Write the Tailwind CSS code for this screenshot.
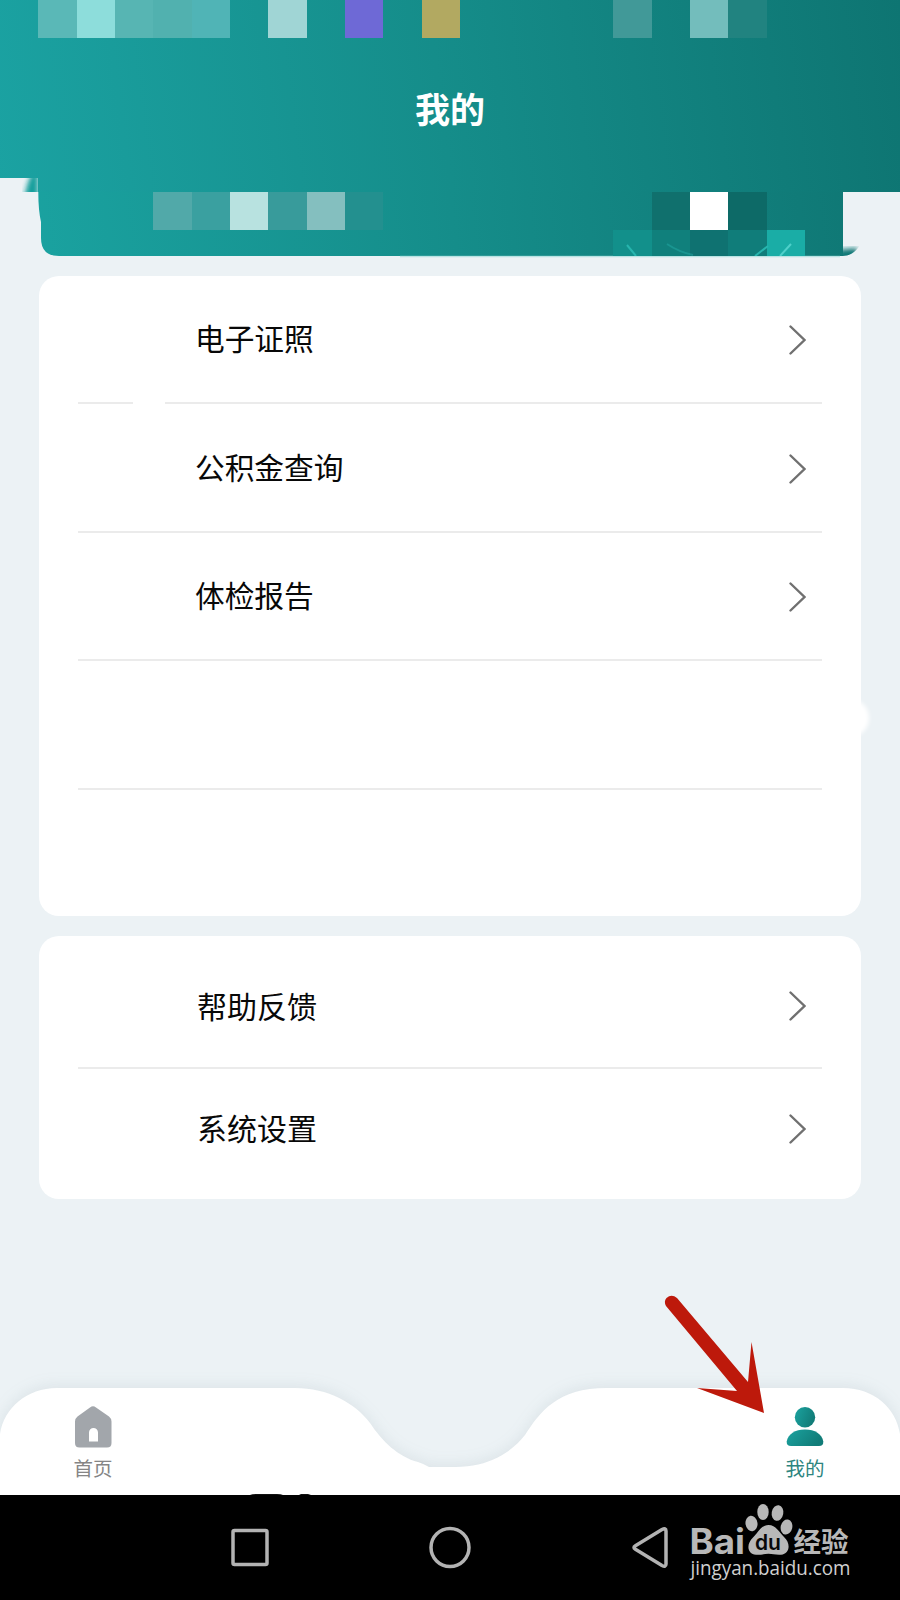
<!DOCTYPE html>
<html lang="zh-CN">
  <head>
    <meta charset="UTF-8" />
    <meta name="viewport" content="width=device-width, initial-scale=1.0" />
    <title>我的</title>
    <script src="https://cdn.jsdelivr.net/npm/@tailwindcss/browser@4"></script>
  </head>
  <body
    class="relative w-[900px] h-[1600px] overflow-hidden bg-[#ecf2f5] font-['Noto_Sans_CJK_SC',sans-serif] text-[#080808] flex flex-col"
  >
    <!-- Header -->
    <header class="relative h-[256px] shrink-0">
      <svg class="absolute inset-0" width="900" height="262" viewBox="0 0 900 262">
        <defs>
          <linearGradient id="teal" gradientUnits="userSpaceOnUse" x1="-30" y1="120" x2="900" y2="0">
            <stop offset="0" stop-color="#1ba3a3" />
            <stop offset="0.5" stop-color="#158d8a" />
            <stop offset="1" stop-color="#0e7572" />
          </linearGradient>
          <linearGradient id="cardTeal" gradientUnits="userSpaceOnUse" x1="30" y1="250" x2="870" y2="150">
            <stop offset="0" stop-color="#1aa2a0" />
            <stop offset="0.5" stop-color="#158d8a" />
            <stop offset="1" stop-color="#0f7774" />
          </linearGradient>
          <filter id="soft"><feGaussianBlur stdDeviation="2.5" /></filter>
          <clipPath id="edge"><rect x="0" y="178" width="60" height="14" /></clipPath>
          <clipPath id="corner"><path d="M843 240H863Q855 256 843 256Z" /></clipPath>
        </defs>
        <path d="M0 0H900V192H38V178H0Z" fill="url(#teal)" />
        <path d="M38 170H34Q27 180 24 200H38V170Z" fill="#199f9c" filter="url(#soft)" clip-path="url(#edge)" />
        <path d="M38.3 191.500H843V256H59Q41 256 41 238V222Q38.300 210 38.300 192Z" fill="url(#cardTeal)" />
        <path d="M838 250L857 248V260H838Z" fill="#0f7774" filter="url(#soft)" clip-path="url(#corner)" />
        <path d="M400 256.500H840" stroke="#a4dedc" stroke-width="1.500" opacity="0.7" />
      </svg>
      <div class="relative h-[38.3px] pl-[38.33px] flex">
        <span class="w-[38.33px] bg-[#5ab8b7]"></span>
        <span class="w-[38.33px] bg-[#8ddddb]"></span>
        <span class="w-[38.33px] bg-[#57b5b3]"></span>
        <span class="w-[38.33px] bg-[#51b1af]"></span>
        <span class="w-[38.33px] bg-[#50b4b6]"></span>
        <span class="w-[38.33px] ml-[38.33px] bg-[#a0d5d5]"></span>
        <span class="w-[38.33px] ml-[38.33px] bg-[#6e69d6]"></span>
        <span class="w-[38.33px] ml-[38.33px] bg-[#b2a961]"></span>
        <span class="w-[38.33px] ml-[153.33px] bg-[#419998]"></span>
        <span class="w-[38.33px] ml-[38.33px] bg-[#73bdbc]"></span>
        <span class="w-[38.33px] bg-[#218380]"></span>
      </div>
      <h1 class="relative h-[153.4px] pb-[14px] flex items-center justify-center text-[35px] leading-none font-bold text-white">
        我的
      </h1>
      <div class="relative h-[38.3px] pl-[153.33px] flex">
        <span class="w-[38.33px] bg-[#51a9a9]"></span>
        <span class="w-[38.33px] bg-[#3aa0a0]"></span>
        <span class="w-[38.33px] bg-[#b8e2e0]"></span>
        <span class="w-[38.33px] bg-[#389b9b]"></span>
        <span class="w-[38.33px] bg-[#84bfbf]"></span>
        <span class="w-[38.33px] bg-[#23908f]"></span>
        <span class="w-[38.33px] ml-[268.33px] bg-[#10706d]"></span>
        <span class="w-[38.33px] bg-white"></span>
        <span class="w-[38.33px] bg-[#0d6a67]"></span>
      </div>
      <div class="relative h-[26px] pl-[613.3px] flex">
        <span class="w-[38.33px] bg-[#12908b]"></span>
        <span class="w-[38.33px] bg-[#10807c]"></span>
        <span class="w-[38.33px] bg-[#0f7271]"></span>
        <span class="w-[38.33px] bg-[#107d7a]"></span>
        <span class="w-[38.33px] bg-[#1aada6]"></span>
      </div>
      <svg class="absolute left-[613px] top-[238px]" width="192" height="18" viewBox="0 0 192 18" fill="none" stroke="#27b5ae" stroke-width="2">
        <path d="M14 7L23 18" />
        <path d="M54 6Q66 14 80 17" opacity="0.4" />
        <path d="M142 18L155 8" />
        <path d="M167 18L178 6" stroke="#4fd0ca" />
      </svg>
    </header>

    <main class="relative flex flex-col gap-5 px-[39px] pt-5">
      <!-- Services -->
      <div class="absolute left-[831px] top-[443px] w-[38px] h-[38px] rounded-full bg-white blur-[2px]"></div>
      <section class="relative h-[640px] rounded-[20px] bg-white px-[39px]">
        <a class="relative h-[128.400px] pl-[117px] pr-4 flex items-center justify-between border-b-2 border-[#ebebeb] text-[29.700px] leading-none">
          <span class="-mt-[2px]">电子证照</span>
          <svg class="mt-[2px]" width="17" height="30" viewBox="0 0 17 30" fill="none" stroke="#707070" stroke-width="2.4" stroke-linecap="round"><path d="M1.500 1.500L15.500 15L1.500 28.500" /></svg>
          <i class="absolute left-[55px] -bottom-[3px] w-[32px] h-1 bg-white"></i>
        </a>
        <a class="h-[128.400px] pl-[117px] pr-4 flex items-center justify-between border-b-2 border-[#ebebeb] text-[29.700px] leading-none">
          <span class="-mt-[2px]">公积金查询</span>
          <svg class="mt-[2px]" width="17" height="30" viewBox="0 0 17 30" fill="none" stroke="#707070" stroke-width="2.4" stroke-linecap="round"><path d="M1.500 1.500L15.500 15L1.500 28.500" /></svg>
        </a>
        <a class="h-[128.400px] pl-[117px] pr-4 flex items-center justify-between border-b-2 border-[#ebebeb] text-[29.700px] leading-none">
          <span class="-mt-[2px]">体检报告</span>
          <svg class="mt-[2px]" width="17" height="30" viewBox="0 0 17 30" fill="none" stroke="#707070" stroke-width="2.4" stroke-linecap="round"><path d="M1.500 1.500L15.500 15L1.500 28.500" /></svg>
        </a>
        <div class="h-[128.400px] border-b-2 border-[#ebebeb]"></div>
      </section>

      <!-- Support -->
      <section class="h-[263px] rounded-[20px] bg-white px-[39px]">
        <a class="h-[132.500px] pt-[9px] pl-[119px] pr-4 flex items-center justify-between border-b-2 border-[#ebebeb] text-[30px] leading-none">
          <span class="-mt-[2px]">帮助反馈</span>
          <svg class="mt-[1px]" width="17" height="30" viewBox="0 0 17 30" fill="none" stroke="#707070" stroke-width="2.4" stroke-linecap="round"><path d="M1.500 1.500L15.500 15L1.500 28.500" /></svg>
        </a>
        <a class="h-[120px] pl-[119px] pr-4 flex items-center justify-between text-[30px] leading-none">
          <span class="-mt-[3px]">系统设置</span>
          <svg width="17" height="30" viewBox="0 0 17 30" fill="none" stroke="#707070" stroke-width="2.4" stroke-linecap="round"><path d="M1.500 1.500L15.500 15L1.500 28.500" /></svg>
        </a>
      </section>
    </main>

    <!-- Tab bar -->
    <nav class="relative mt-auto h-[107px] shrink-0 px-[73px] pt-[17px] flex justify-between">
      <svg class="absolute left-0 bottom-0 overflow-visible" width="900" height="107" viewBox="0 0 900 107">
        <path
          d="M0 107V46C4 20 27 0 57 0H295C328 0 355 15 370 35C382 53 398 69 418 74Q424 76 429 79H456C488 79 511 65 525 47C540 24 557 0 607 0H843C874 0 896 20 900 46V107Z"
          fill="white"
          class="drop-shadow-[0_-3px_7px_rgba(90,120,130,0.10)]"
        />
        <path d="M250 107Q252 106 257 106H277Q281 106 283 107ZM299 107L301 106H308L311 107Z" fill="#111" />
      </svg>
      <a class="relative w-10 flex flex-col items-center text-[19.500px] leading-none text-[#858585]">
        <svg width="40" height="44" viewBox="0 0 40 44">
          <path d="M17 2.500Q20 .2 23 2.500L36 11.500Q38.500 13.500 38.500 16.500V38Q38.500 42.500 34 42.500H6.500Q2 42.500 2 38V16.500Q2 13.500 4.500 11.500Z" fill="#a2a6ab" />
          <path d="M16 36.500V27.500a4.500 4.500 0 0 1 9 0V36.500Z" fill="white" />
        </svg>
        <span class="mt-[9px] whitespace-nowrap">首页</span>
      </a>
      <a class="relative w-10 mr-[2px] flex flex-col items-center text-[19.500px] leading-none text-[#2d8580]">
        <svg width="40" height="44" viewBox="0 0 40 44">
          <defs>
            <linearGradient id="person" x1="0" y1="0" x2="1" y2="0.400">
              <stop offset="0" stop-color="#1ba3a0" />
              <stop offset="1" stop-color="#117c78" />
            </linearGradient>
          </defs>
          <circle cx="20" cy="12.300" r="10.200" fill="url(#person)" />
          <path d="M6 41Q1.500 41 1.700 36.500C3 29 10 24.500 20 24.500S37 29 38.300 36.500Q38.500 41 34 41Z" fill="url(#person)" />
        </svg>
        <span class="mt-[9px] whitespace-nowrap">我的</span>
      </a>
    </nav>

    <!-- Android navigation -->
    <footer class="relative h-[105px] shrink-0 bg-black">
      <svg width="900" height="105" viewBox="0 0 900 105" fill="none" stroke="#b3b3b3" stroke-width="3.500" stroke-linejoin="round">
        <rect x="233" y="35.500" width="34" height="34" rx="1.500" />
        <circle cx="450" cy="52.500" r="19" />
        <path d="M634 52.500Q634 51.500 635 51L662 34.500Q666 32.500 666 36V69Q666 72.500 662 70.500L635 54Q634 53.500 634 52.500Z" />
        <g fill="#b8b8b8" stroke="none">
          <ellipse cx="751.500" cy="28.500" rx="6" ry="7.800" transform="rotate(-8 751.500 28.500)" />
          <ellipse cx="763" cy="17" rx="5.700" ry="8" />
          <ellipse cx="777.500" cy="18" rx="5.800" ry="7.800" transform="rotate(10 777.500 18)" />
          <ellipse cx="786.500" cy="32" rx="5.800" ry="7.600" transform="rotate(12 786.500 32)" />
          <path d="M768.500 30C776 30 779 37 784 42C791 48 790 59 781 59.700C775 60 773 58.800 768.500 58.800S761 60 756 59.700C747 59 746 49 753 42.500C758 38 761 30 768.500 30Z" />
          <text x="689.500" y="59" font-family="Inter, sans-serif" font-weight="700" font-size="35" textLength="55.500" lengthAdjust="spacingAndGlyphs">Bai</text>
          <text x="755" y="55" fill="#080808" font-family="Inter, sans-serif" font-weight="600" font-size="21" textLength="26" lengthAdjust="spacingAndGlyphs">du</text>
          <text x="793.500" y="56.500" font-family="Noto Sans CJK SC, sans-serif" font-weight="700" font-size="27.500" textLength="55" lengthAdjust="spacingAndGlyphs">经验</text>
          <text x="690.500" y="80" fill="#d0d0d0" font-family="Open Sans, sans-serif" font-size="19.500" textLength="160" lengthAdjust="spacingAndGlyphs">jingyan.baidu.com</text>
        </g>
      </svg>
    </footer>

    <!-- Pointer to the profile tab -->
    <svg class="absolute left-[640px] top-[1270px]" width="160" height="160" viewBox="0 0 160 160">
      <path d="M26.500 28Q31.500 23.500 37 28L108 112L111.500 72L124 143L57 118L97 121L26 36Q23.500 31.500 26.500 28Z" fill="#bd190b" />
    </svg>
  </body>
</html>
